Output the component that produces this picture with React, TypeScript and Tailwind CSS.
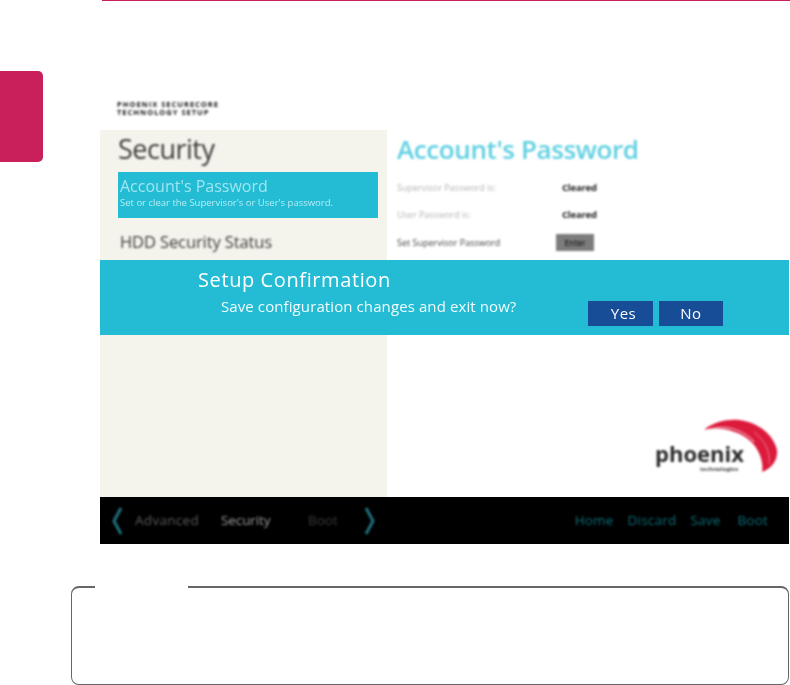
import { ReactNode } from 'react';

function InfoRow({ label, value, dark }: { label: string; value: ReactNode; dark?: boolean }) {
  return (
    <div className="flex items-center h-[27.5px]">
      <span className={`w-[165px] text-[9px] blur-[0.8px] ${dark ? 'text-[#444]' : 'text-[#b5b5b5]'}`}>{label}</span>
      {value}
    </div>
  );
}

function Cleared() {
  return <span className="text-[9.5px] font-bold tracking-[-0.2px] text-[#222] blur-[0.8px]">Cleared</span>;
}

function PhoenixLogo() {
  return (
    <div className="relative w-[123px] h-[56px]">
      <svg width="74" height="55" viewBox="0 0 74 55" className="absolute right-0 top-[2px] blur-[1.2px]" fill="none">
        <path d="M0 12 C10 3 25 1 35 2 C55 4 70 18 73 32 C74 42 68 50 58 54 C60 44 55 30 45 22 C35 13 15 8 0 12 Z" fill="#dc1a3c" />
        <path d="M6 11 C20 7 38 10 50 24" stroke="#f4b3bf" strokeWidth="1.2" />
        <path d="M50 14 C60 22 67 33 65 46" stroke="#ee7c92" strokeWidth="1" />
      </svg>
      <span className="absolute left-0 top-[27px] text-[22px] leading-[21px] font-bold text-[#2c2c2c] blur-[1.2px]">phoenix</span>
      <span className="absolute left-[45px] top-[50px] text-[6px] leading-[6px] font-bold text-[#444] blur-[0.8px]">technologies</span>
    </div>
  );
}

export default function App() {
  return (
    <div className="w-[790px] h-[685px] bg-white overflow-hidden font-['Open_Sans',sans-serif]">
      <div className="ml-[102px] h-[1px] bg-[#c91f5b]" />

      <div className="flex h-[543px]">
        {/* side tab */}
        <div className="w-[100px] shrink-0 pt-[70px]">
          <div className="w-[43px] h-[91px] bg-[#c91f5b] rounded-r-[5px]" />
        </div>

        {/* bios screenshot */}
        <div className="w-[689px] shrink-0 pt-[96px] flex flex-col">
          <div className="h-[33px] pl-[17px] pt-[3px] text-[7.5px] leading-[8px] tracking-[1px] font-bold uppercase text-[#111] blur-[0.9px]">
            <div>Phoenix Securecore</div>
            <div>Technology Setup</div>
          </div>

          <div className="relative flex h-[368px]">
            <div className="w-[287px] bg-[#f5f4ec] pl-[18px] pr-[9px] pt-[1px]">
              <div className="text-[27px] leading-[36px] tracking-[-0.5px] text-[#3c3c3c] blur-[0.8px]">Security</div>
              <div className="mt-[5px] h-[46px] bg-[#23bcd4] pl-[2px] pt-[5px] blur-[0.5px]">
                <div className="text-[16px] leading-[19px] text-[#9fe6f0] blur-[0.4px]">Account's Password</div>
                <div className="mt-[1px] text-[9.5px] leading-[12px] text-[#b5edf4] blur-[0.4px]">Set or clear the Supervisor's or User's password.</div>
              </div>
              <div className="mt-[13px] pl-[2px] text-[16.5px] leading-[22px] tracking-[-0.1px] font-medium text-[#3c3c3c] blur-[0.8px]">HDD Security Status</div>
            </div>

            <div className="relative flex-1 pl-[10px] pt-[1px]">
              <div className="text-[26px] leading-[36px] font-semibold tracking-[-0.4px] text-[#5fd0e2] blur-[0.9px]">Account's Password</div>
              <div className="mt-[7px]">
                <InfoRow label="Supervisor Password is:" value={<Cleared />} />
                <InfoRow label="User Password is:" value={<Cleared />} />
                <InfoRow
                  label="Set Supervisor Password"
                  dark
                  value={
                    <span className="-ml-[6px] w-[38px] h-[17px] bg-[#7c7c7c] text-center text-[8px] leading-[17px] font-semibold text-[#222] blur-[1px]">
                      Enter
                    </span>
                  }
                />
              </div>
              <div className="absolute bottom-[25px] right-[11px]">
                <PhoenixLogo />
              </div>
            </div>

            {/* confirmation dialog */}
            <div className="absolute left-0 right-0 top-[130px] h-[75px] bg-[#23bcd4] pl-[98px] pt-[6px] text-white">
              <div className="text-[20px] leading-[27px] tracking-[0.6px] blur-[0.4px]">Setup Confirmation</div>
              <div className="ml-[23px] mt-[3px] text-[15px] leading-[20px] tracking-[0.1px] text-[#f0fbfd] blur-[0.4px]">Save configuration changes and exit now?</div>
              <div className="absolute left-[488px] top-[41px] flex gap-[6px]">
                <div className="w-[65px] h-[25px] bg-[#174c96] pl-[6px] text-center text-[15px] leading-[24px] tracking-[0.5px] blur-[0.3px]">Yes</div>
                <div className="w-[64px] h-[25px] bg-[#174c96] text-center text-[15px] leading-[24px] tracking-[0.5px] blur-[0.3px]">No</div>
              </div>
            </div>
          </div>

          {/* footer bar */}
          <div className="h-[47px] bg-black flex items-center text-[13.5px] font-medium">
            <svg width="14" height="30" viewBox="0 0 14 30" className="ml-[10px] blur-[0.8px]" fill="none">
              <path d="M11 2 L4 15 L11 28" stroke="#1f6f7c" strokeWidth="3" />
            </svg>
            <span className="ml-[11px] w-[86px] tracking-[0.3px] text-[#5a5a5a] blur-[0.8px]">Advanced</span>
            <span className="w-[87px] tracking-[-0.1px] text-[#9a9a9a] blur-[0.8px]">Security</span>
            <span className="w-[55px] text-[#3a3a3a] blur-[0.8px]">Boot</span>
            <svg width="14" height="30" viewBox="0 0 14 30" className="blur-[0.8px]" fill="none">
              <path d="M3 2 L10 15 L3 28" stroke="#1f6f7c" strokeWidth="3" />
            </svg>
            <div className="ml-auto mr-[21px] flex gap-[14px] tracking-[0.2px] text-[#0d6d78] blur-[0.8px]">
              <span>Home</span>
              <span>Discard</span>
              <span className="mr-[3px]">Save</span>
              <span>Boot</span>
            </div>
          </div>
        </div>
      </div>

      {/* note box */}
      <div className="relative ml-[71px] mt-[42px] w-[718px] h-[99px] border border-t-2 border-[#666] rounded-[8px]">
        <div className="absolute -top-[3px] left-[23px] w-[93px] h-[4px] bg-white" />
      </div>
    </div>
  );
}
